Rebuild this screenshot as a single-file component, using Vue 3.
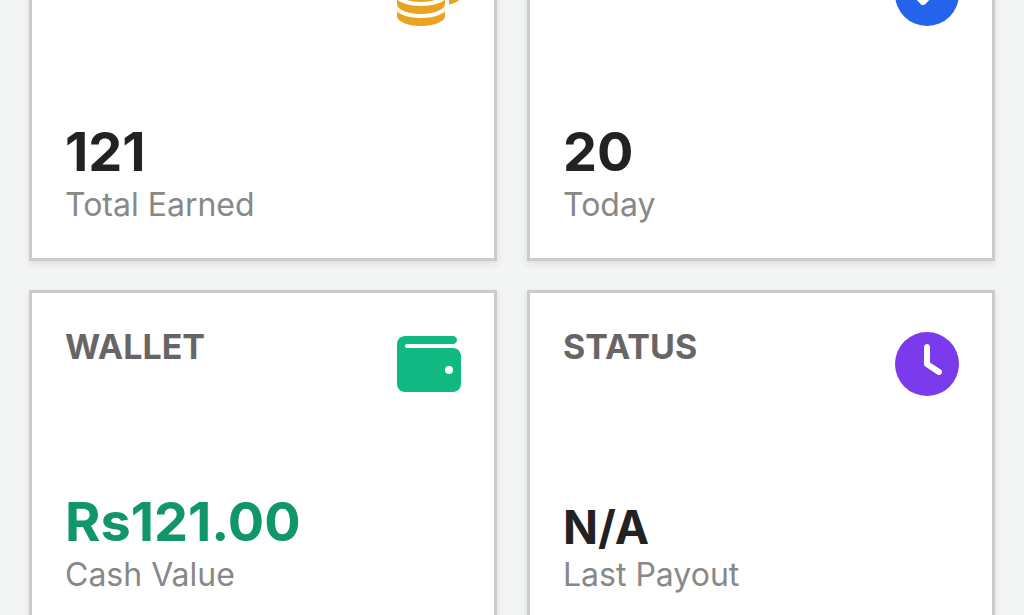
<script setup>
const paths = {
  coins:
    'M512 80c0 18-14.3 34.6-38.4 48c-29.1 16.1-72.5 27.5-122.3 30.9c-3.7-1.8-7.4-3.5-11.3-5C300.6 137.4 248.2 128 192 128c-8.3 0-16.4 .2-24.5 .6l-1.1-.6C142.3 114.6 128 98 128 80c0-44.2 86-80 192-80S512 35.8 512 80zM160.7 161.1c10.2-.7 20.7-1.1 31.3-1.1c62.2 0 117.4 12.3 152.5 31.4C369.3 204.9 384 221.7 384 240c0 4-.7 7.9-2.1 11.7c-4.6 13.2-17 25.3-35 35.5c-.1 .1-.3 .1-.4 .2c-.3 .2-.6 .3-.9 .5c-35 19.4-90.8 32-153.6 32c-59.6 0-112.9-11.3-148.2-29.1c-1.9-.9-3.7-1.9-5.5-2.9C14.3 274.6 0 258 0 240c0-34.8 53.4-64.5 128-75.4c10.5-1.5 21.4-2.7 32.7-3.5zM416 240c0-21.9-10.6-39.9-24.1-53.4c28.3-4.4 54.2-11.4 76.2-20.5c16.3-6.8 31.5-15.2 43.9-25.5V176c0 19.3-16.5 37.1-43.8 50.9c-14.6 7.4-32.4 13.7-52.4 18.5c.1-1.8 .2-3.5 .2-5.3zm-32 96c0 18-14.3 34.6-38.4 48c-1.8 1-3.6 1.9-5.5 2.9C304.9 404.7 251.6 416 192 416c-62.8 0-118.6-12.6-153.6-32C14.3 370.6 0 354 0 336V300.6c12.5 10.3 27.6 18.7 43.9 25.5C83.4 342.6 135.8 352 192 352s108.6-9.4 148.1-25.9c7.8-3.2 15.3-6.9 22.4-10.9c6.1-3.4 11.8-7.2 17.2-11.2c1.5-1.1 2.9-2.3 4.3-3.4V304v5.7V336zm32 0V304 278.1c19-4.2 36.5-9.5 52.1-16c16.3-6.8 31.5-15.2 43.9-25.5V272c0 10.5-5 21-14.9 30.9c-16.3 16.3-45 29.7-81.3 38.4c.1-1.7 .2-3.5 .2-5.3zM192 448c56.2 0 108.6-9.4 148.1-25.9c16.3-6.8 31.5-15.2 43.9-25.5V432c0 44.2-86 80-192 80S0 476.2 0 432V396.6c12.5 10.3 27.6 18.7 43.9 25.5C83.4 438.6 135.8 448 192 448z',
  check:
    'M256 512A256 256 0 1 0 256 0a256 256 0 1 0 0 512zM369 209L241 337c-9.4 9.4-24.6 9.4-33.9 0l-64-64c-9.4-9.4-9.4-24.6 0-33.9s24.6-9.4 33.9 0l47 47L335 175c9.4-9.4 24.6-9.4 33.9 0s9.4 24.6 0 33.9z',
  wallet:
    'M64 32C28.7 32 0 60.7 0 96V416c0 35.3 28.7 64 64 64H448c35.3 0 64-28.7 64-64V192c0-35.3-28.7-64-64-64H80c-8.8 0-16-7.2-16-16s7.2-16 16-16H448c17.7 0 32-14.3 32-32s-14.3-32-32-32H64zM416 272a32 32 0 1 1 0 64 32 32 0 1 1 0-64z',
  clock:
    'M256 0a256 256 0 1 1 0 512A256 256 0 1 1 256 0zM232 120V256c0 8 4 15.5 10.7 20l96 64c11 7.4 25.9 4.4 33.3-6.7s4.4-25.9-6.7-33.3L280 243.2V120c0-13.3-10.7-24-24-24s-24 10.7-24 24z',
}

const cards = [
  { icon: 'coins', value: '121', label: 'Total Earned' },
  { icon: 'check', value: '20', label: 'Today' },
  { icon: 'wallet', title: 'WALLET', value: 'Rs121.00', label: 'Cash Value', valueClass: 'money' },
  { icon: 'clock', title: 'STATUS', value: 'N/A', label: 'Last Payout', valueClass: 'small' },
]
</script>

<template>
  <main class="page">
    <section class="stats">
      <article v-for="card in cards" :key="card.label" class="card">
        <header class="head">
          <h2 v-if="card.title" class="title">{{ card.title }}</h2>
          <svg class="icon" :class="card.icon" viewBox="0 0 512 512" aria-hidden="true">
            <path :d="paths[card.icon]" fill="currentColor" fill-rule="evenodd" />
          </svg>
        </header>
        <div>
          <p class="value" :class="card.valueClass">{{ card.value }}</p>
          <p class="label">{{ card.label }}</p>
        </div>
      </article>
    </section>
  </main>
</template>

<style>
body {
  background: #f4f6f6;
}
</style>

<style scoped>
.page {
  height: 100vh;
  overflow: hidden;
  background: #f4f6f6;
  font-family: Inter, "Liberation Sans", sans-serif;
}

/* The panel is scrolled: the heads of the first row lie above the window. */
.stats {
  display: grid;
  grid-template-columns: repeat(2, 1fr);
  gap: 29px 30px;
  margin: -80px 29px 0;
}

.card {
  display: flex;
  flex-direction: column;
  justify-content: space-between;
  box-sizing: border-box;
  min-height: 341px;
  padding: 33px;
  border: 3px solid #cbcbcb;
  background: #fff;
  box-shadow: 0 3px 8px rgba(0, 0, 0, 0.1);
}

.head {
  display: flex;
  align-items: flex-start;
  justify-content: space-between;
}

.title {
  margin: 0;
  font-size: 34px;
  line-height: 42px;
  font-weight: 700;
  color: #666;
}

.icon {
  width: 64px;
  height: 64px;
  margin: 6px 0 0 auto;
}

.coins {
  color: #eaa221;
}

.check {
  color: #2563eb;
}

.wallet {
  color: #10b981;
}

.clock {
  color: #7c3aed;
}

.value {
  margin: 0;
  font-size: 54px;
  line-height: 66px;
  font-weight: 700;
  color: #222;
}

.money {
  color: #109669;
}

.small {
  font-size: 46px;
  line-height: 56px;
}

.label {
  margin: 0;
  font-size: 32px;
  line-height: 40px;
  color: #888;
}
</style>
